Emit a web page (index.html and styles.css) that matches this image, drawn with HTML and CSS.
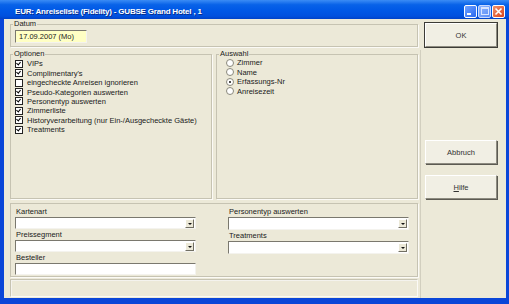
FILE: index.html
```html
<!DOCTYPE html>
<html lang="de">
<head>
    <meta charset="UTF-8">
    <title>EUR: Anreiseliste (Fidelity)</title>
    <link rel="stylesheet" href="styles.css">
</head>
<body>

    <div class="window">
        <!-- Title bar -->
        <div class="titlebar">
            <span class="title">EUR: Anreiseliste (Fidelity) - GUBSE Grand Hotel , 1</span>
            <div class="caption-buttons">
                <span class="cap-btn min"><span class="min-bar"></span></span>
                <span class="cap-btn max"><span class="max-box"></span></span>
                <span class="cap-btn close">
                    <svg width="9" height="9" viewBox="0 0 9 9"><path d="M1.5 1.5 L7.5 7.5 M7.5 1.5 L1.5 7.5" stroke="#fff" stroke-width="1.6"/></svg>
                </span>
            </div>
        </div>

        <div class="client">
            <div class="main">
                <fieldset class="group datum">
                    <legend>Datum</legend>
                    <div class="date-field">17.09.2007 (Mo)</div>
                </fieldset>

                <div class="lower-area">
                    <div class="middle">
                        <fieldset class="group options">
                            <legend>Optionen</legend>
                            <div class="check-row"><span class="check on"></span>VIPs</div>
                            <div class="check-row"><span class="check on"></span>Complimentary's</div>
                            <div class="check-row"><span class="check"></span>eingecheckte Anreisen ignorieren</div>
                            <div class="check-row"><span class="check on"></span>Pseudo-Kategorien auswerten</div>
                            <div class="check-row"><span class="check on"></span>Personentyp auswerten</div>
                            <div class="check-row"><span class="check on"></span>Zimmerliste</div>
                            <div class="check-row"><span class="check on"></span>Historyverarbeitung (nur Ein-/Ausgecheckte Gäste)</div>
                            <div class="check-row"><span class="check on"></span>Treatments</div>
                        </fieldset>

                        <fieldset class="group selection">
                            <legend>Auswahl</legend>
                            <div class="radio-row"><span class="radio"></span>Zimmer</div>
                            <div class="radio-row"><span class="radio"></span>Name</div>
                            <div class="radio-row"><span class="radio on"></span>Erfassungs-Nr</div>
                            <div class="radio-row"><span class="radio"></span>Anreisezeit</div>
                        </fieldset>
                    </div>

                    <div class="group filters">
                        <div class="filter-col">
                            <label class="field-label">Kartenart</label>
                            <div class="combo"><span class="combo-arrow"></span></div>
                            <label class="field-label">Preissegment</label>
                            <div class="combo"><span class="combo-arrow"></span></div>
                            <label class="field-label">Besteller</label>
                            <div class="text-field"></div>
                        </div>
                        <div class="filter-col">
                            <label class="field-label">Personentyp auswerten</label>
                            <div class="combo"><span class="combo-arrow"></span></div>
                            <label class="field-label">Treatments</label>
                            <div class="combo"><span class="combo-arrow"></span></div>
                        </div>
                    </div>

                    <div class="statusbar"></div>
                </div>
            </div>

            <!-- Dialog buttons -->
            <div class="buttons">
                <button class="btn default">OK</button>
                <button class="btn cancel">Abbruch</button>
                <button class="btn help"><u>H</u>ilfe</button>
            </div>
        </div>
    </div>

</body>
</html>
```

FILE: styles.css
```css
body {
    margin: 0;
    font-family: 'Liberation Sans', Arial, sans-serif;
    font-size: 7.5px;
    color: #1a1a1a;
    background-color: #ece9d8;
}

.window {
    width: 509px;
    height: 304px;
    background-color: #0a46d8;
    display: flex;
    flex-direction: column;
    overflow: hidden;
}

/* Title bar */
.titlebar {
    height: 19px;
    flex-shrink: 0;
    display: flex;
    align-items: center;
    justify-content: space-between;
    padding: 0 4px 0 15px;
    background: linear-gradient(#3b8cf5 0%, #0862e8 25%, #0058e6 55%, #0050de 85%, #0042c8 100%);
}

.title {
    color: white;
    font-weight: bold;
    font-size: 8px;
    letter-spacing: -0.2px;
    padding-top: 3px;
    text-shadow: 1px 1px 0 #0a2f8a;
}

.caption-buttons {
    display: flex;
    gap: 1px;
    padding-top: 3px;
}

.cap-btn {
    width: 11px;
    height: 11px;
    border: 1px solid #fff;
    border-radius: 2px;
    background: linear-gradient(135deg, #6fa2ff, #2a68f0);
    display: flex;
    align-items: center;
    justify-content: center;
}

.cap-btn.max {
    background: linear-gradient(135deg, #8fb6ff, #5a8cf5);
    border-color: #c8d8ff;
}

.cap-btn.close {
    background: linear-gradient(135deg, #f0926c, #d8431c);
}

.min-bar {
    width: 4px;
    height: 2px;
    background-color: white;
    margin: 6px 4px 0 0;
}

.max-box {
    width: 6px;
    height: 5px;
    border: 1px solid #d8e4ff;
    border-top-width: 2px;
}

/* Client area */
.client {
    flex: 1;
    margin: 0 3px 6px 4px;
    background-color: #ece9d8;
    padding: 1px 0 0 6px;
    display: flex;
    gap: 4px;
}

.main {
    width: 411px;
    display: flex;
    flex-direction: column;
}

.group {
    margin: 0;
    border: 1px solid #c6c3b2;
    box-shadow: 1px 1px 0 #fbfaf6;
}

legend {
    padding: 0 1px;
    margin-left: -2px;
    line-height: 8px;
    color: #1a1a1a;
}

.datum {
    width: 408px;
    height: 27px;
    box-sizing: border-box;
    padding: 2px 4px 0 4px;
}

.date-field {
    width: 72px;
    height: 13px;
    box-sizing: border-box;
    background-color: #ffffc4;
    border-top: 1px solid #7a786e;
    border-left: 1px solid #7a786e;
    border-right: 1px solid #f4f3ee;
    border-bottom: 1px solid #f4f3ee;
    padding-left: 3px;
    line-height: 11px;
}

.lower-area {
    margin-top: 3px;
    flex: 1;
    border-right: 1px solid #d2cfbf;
    padding-right: 2px;
    display: flex;
    flex-direction: column;
}

.middle {
    display: flex;
    gap: 4px;
    height: 149px;
}

.options {
    width: 202px;
    box-sizing: border-box;
    padding: 1px 4px 0 4px;
}

.selection {
    flex: 1;
    padding: 0 4px 0 4px;
}

.check-row,
.radio-row {
    height: 9.45px;
    display: flex;
    align-items: center;
    white-space: nowrap;
}

.radio-row {
    padding-left: 5px;
}

.check {
    width: 6px;
    height: 6px;
    border: 1px solid #222;
    background-color: white;
    margin-right: 4px;
    position: relative;
}

.check.on::after {
    content: "";
    position: absolute;
    left: 1px;
    top: 0;
    width: 2px;
    height: 3px;
    border: solid #000;
    border-width: 0 1.6px 1.6px 0;
    transform: rotate(40deg);
}

.radio {
    width: 6px;
    height: 6px;
    border: 1px solid #8a887c;
    border-radius: 50%;
    background-color: white;
    margin-right: 3px;
    position: relative;
}

.radio.on::after {
    content: "";
    position: absolute;
    left: 2px;
    top: 2px;
    width: 2px;
    height: 2px;
    border-radius: 50%;
    background-color: #111;
}

/* Lower filter group */
.filters {
    margin-top: 4px;
    width: 408px;
    height: 74px;
    box-sizing: border-box;
    padding: 3px 8px 0 4px;
    display: flex;
    justify-content: space-between;
}

.filter-col {
    width: 181px;
    display: flex;
    flex-direction: column;
}

.field-label {
    line-height: 9px;
    margin-bottom: 1px;
    padding-left: 1px;
}

.combo,
.text-field {
    height: 13px;
    box-sizing: border-box;
    background-color: white;
    border-top: 1px solid #7a786e;
    border-left: 1px solid #7a786e;
    border-right: 1px solid #f4f3ee;
    border-bottom: 1px solid #f4f3ee;
    margin-bottom: 1px;
    display: flex;
    justify-content: flex-end;
    align-items: center;
}

.combo-arrow {
    width: 9px;
    height: 9px;
    margin-right: 1px;
    box-sizing: border-box;
    background-color: #ece9d8;
    border-top: 1px solid #fff;
    border-left: 1px solid #fff;
    border-right: 1px solid #716f64;
    border-bottom: 1px solid #716f64;
    position: relative;
}

.combo-arrow::after {
    content: "";
    position: absolute;
    left: 1.5px;
    top: 3px;
    border-left: 2px solid transparent;
    border-right: 2px solid transparent;
    border-top: 2px solid #111;
}

.statusbar {
    margin-top: 2px;
    width: 408px;
    height: 18px;
    box-sizing: border-box;
    border-top: 1px solid #c6c3b2;
    border-left: 1px solid #c6c3b2;
    border-right: 1px solid #fbfaf6;
    border-bottom: 1px solid #fbfaf6;
    box-shadow: inset 1px 1px 0 #f4f3ee;
}

/* Dialog buttons */
.buttons {
    width: 72px;
    padding-top: 3px;
    display: flex;
    flex-direction: column;
}

.btn {
    height: 24px;
    width: 72px;
    font-family: 'Liberation Sans', Arial, sans-serif;
    font-size: 7.5px;
    color: #333;
    background-color: #f1efe4;
    border-top: 1px solid #fff;
    border-left: 1px solid #fff;
    border-right: 1px solid #8d8b80;
    border-bottom: 1px solid #8d8b80;
    box-shadow: 1px 1px 0 #5c5a52;
    padding: 0;
}

.btn.default {
    outline: 1px solid #3c3b36;
}

.btn u {
    text-decoration: underline;
}

.cancel {
    margin-top: 93px;
}

.help {
    margin-top: 11px;
}
```
